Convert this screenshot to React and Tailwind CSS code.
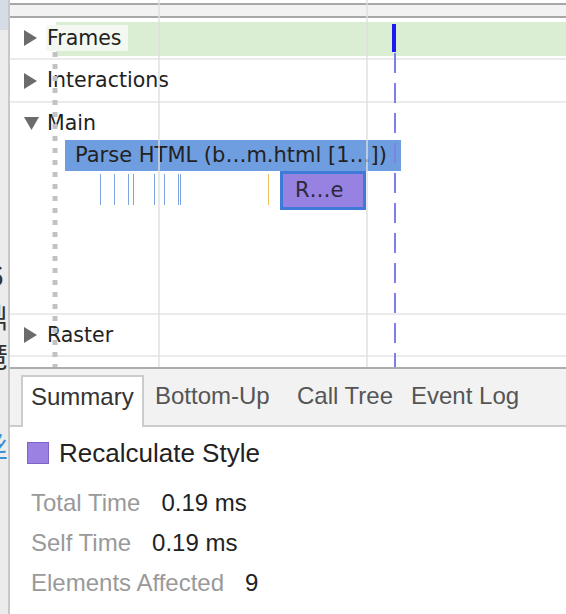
import React from "react";

const TriRight = () => (
  <svg width="13" height="16" viewBox="0 0 13 16" className="shrink-0">
    <polygon points="0,0 13,8 0,16" fill="#6b6b6b" />
  </svg>
);

const TriDown = () => (
  <svg width="15" height="13" viewBox="0 0 15 13" className="shrink-0">
    <polygon points="0,0 15,0 7.5,13" fill="#6b6b6b" />
  </svg>
);

const Sep = () => <div className="h-[2px] bg-[#ebebeb]" />;

const ticks = [
  { x: 90, c: "#7ea6de" },
  { x: 104, c: "#7ea6de" },
  { x: 118, c: "#7ea6de" },
  { x: 123, c: "#7ea6de" },
  { x: 144, c: "#7ea6de" },
  { x: 154, c: "#7ea6de" },
  { x: 168, c: "#7ea6de" },
  { x: 170, c: "#7ea6de" },
  { x: 258, c: "#f0c060" },
];

const stats = [
  { label: "Total Time", value: "0.19 ms" },
  { label: "Self Time", value: "0.19 ms" },
  { label: "Elements Affected", value: "9" },
];

export default function App() {
  const row = "font-['DejaVu_Sans',sans-serif] text-[20.5px] text-[#222]";

  return (
    <div className="w-[566px] h-[614px] flex bg-white overflow-hidden">
      {/* clipped sidebar of the page behind */}
      <div className="w-[10px] shrink-0 flex flex-col bg-[#ececec] border-r-[2px] border-[#c8c8c8] overflow-hidden font-['Noto_Sans_CJK_SC',sans-serif] text-[28px] text-[#333] leading-none">
        <div className="h-[30px] bg-[#d6dce6]" />
        <div className="ml-[-12px] mt-[230px]">6</div>
        <div className="ml-[-20px] mt-[14px]">鼎</div>
        <div className="ml-[-20px] mt-[12px]">琶</div>
        <div className="ml-[-20px] mt-[62px] text-[#3b8fd0]">丝</div>
      </div>

      <div className="flex-1 flex flex-col">
        {/* flame chart */}
        <div className="relative h-[367px]">
          <div className="h-[3px]" />
          <div className="h-[2px] bg-[#a8a8a8]" />
          <div className="h-[11px] bg-[#f2f2f2]" />
          <div className="h-[2px] bg-[#a8a8a8]" />

          <div className="h-[40px] relative">
            <div className="absolute left-[46px] right-0 top-[4px] h-[34px] bg-[#d9eed3]" />
            <div className={`relative h-full flex items-center pl-[14px] ${row}`}>
              <TriRight />
              <span className="ml-[9px] px-[1px] h-[26px] w-[82px] flex items-center bg-[#f3f8f1]">Frames</span>
            </div>
          </div>
          <Sep />
          <div className={`h-[41px] flex items-center pl-[14px] ${row}`}>
            <TriRight />
            <span className="ml-[10px]">Interactions</span>
          </div>
          <Sep />

          <div className="h-[210px] relative">
            <div className={`h-[37px] pt-[3px] flex items-center pl-[14px] ${row}`}>
              <TriDown />
              <span className="ml-[8px]">Main</span>
            </div>
            <div className="ml-[55px] w-[336px] h-[31px] bg-[#6f9ee0] flex items-center pl-[10px] font-['DejaVu_Sans',sans-serif] text-[21px] text-[#222] whitespace-nowrap">
              Parse HTML (b…m.html [1…])
            </div>
            <div className="relative h-[39px]">
              {ticks.map((t) => (
                <div
                  key={t.x}
                  className="absolute top-[3px] w-[1px] h-[31px]"
                  style={{ left: t.x, backgroundColor: t.c }}
                />
              ))}
              <div className="absolute left-[270px] top-0 w-[86px] h-[39px] border-[3px] border-[#3e7ad8] bg-[#9781e1] flex items-center pl-[12px] font-['DejaVu_Sans',sans-serif] text-[21px] text-[#2a2a3a]">
                R…e
              </div>
            </div>
          </div>
          <Sep />
          <div className={`h-[40px] flex items-center pl-[14px] ${row}`}>
            <TriRight />
            <span className="ml-[10px]">Raster</span>
          </div>
          <Sep />

          {/* overlays: grid lines, gutter, frame marker */}
          <div className="absolute left-[148px] top-0 w-[2px] h-full bg-[#dedede]/70" />
          <div className="absolute left-[356px] top-0 w-[2px] h-full bg-[#dedede]/70" />
          <svg className="absolute left-[42px] top-[52px]" width="6" height="315">
            <line x1="3" y1="0" x2="3" y2="315" stroke="#c2c2c2" strokeWidth="5" strokeDasharray="5 7" />
          </svg>
          <div className="absolute left-[382px] top-[24px] w-[4px] h-[28px] bg-[#1a1aef]" />
          <svg className="absolute left-[383px] top-[52px]" width="4" height="315">
            <line x1="2" y1="1" x2="2" y2="315" stroke="#7f7fe8" strokeWidth="2" strokeDasharray="20 10" />
          </svg>
        </div>

        {/* tabs */}
        <div className="h-[60px] bg-[#f2f2f2] border-t-[2px] border-[#acacac] border-b-[2px] border-b-[#cccccc] flex items-end pl-[11px] font-['Liberation_Sans',sans-serif] text-[24px]">
          <div className="w-[123px] h-[52px] pb-[10px] bg-white border-[2px] border-b-0 border-[#cccccc] flex items-center pl-[8px] text-[#333] mb-[-2px]">
            Summary
          </div>
          <div className="w-[142px] h-[52px] pb-[6px] flex items-center pl-[11px] text-[#555]">Bottom-Up</div>
          <div className="w-[114px] h-[52px] pb-[6px] flex items-center pl-[11px] text-[#555]">Call Tree</div>
          <div className="h-[52px] pb-[6px] flex items-center pl-[11px] text-[#555]">Event Log</div>
        </div>

        {/* summary */}
        <div className="flex-1 font-['Liberation_Sans',sans-serif] pl-[17px] pt-[13px]">
          <div className="flex items-center h-[26px]">
            <div className="w-[22px] h-[22px] bg-[#9b82e2] border border-[#7c64c8]" />
            <span className="ml-[10px] text-[26px] text-[#222]">Recalculate Style</span>
          </div>
          <div className="mt-[23px] pl-[4px] flex flex-col gap-[12px] text-[24px]">
            {stats.map((s) => (
              <div key={s.label} className="h-[28px] flex items-center">
                <span className="text-[#999]">{s.label}</span>
                <span className="ml-[21px] text-[#222]">{s.value}</span>
              </div>
            ))}
          </div>
        </div>
      </div>
    </div>
  );
}
